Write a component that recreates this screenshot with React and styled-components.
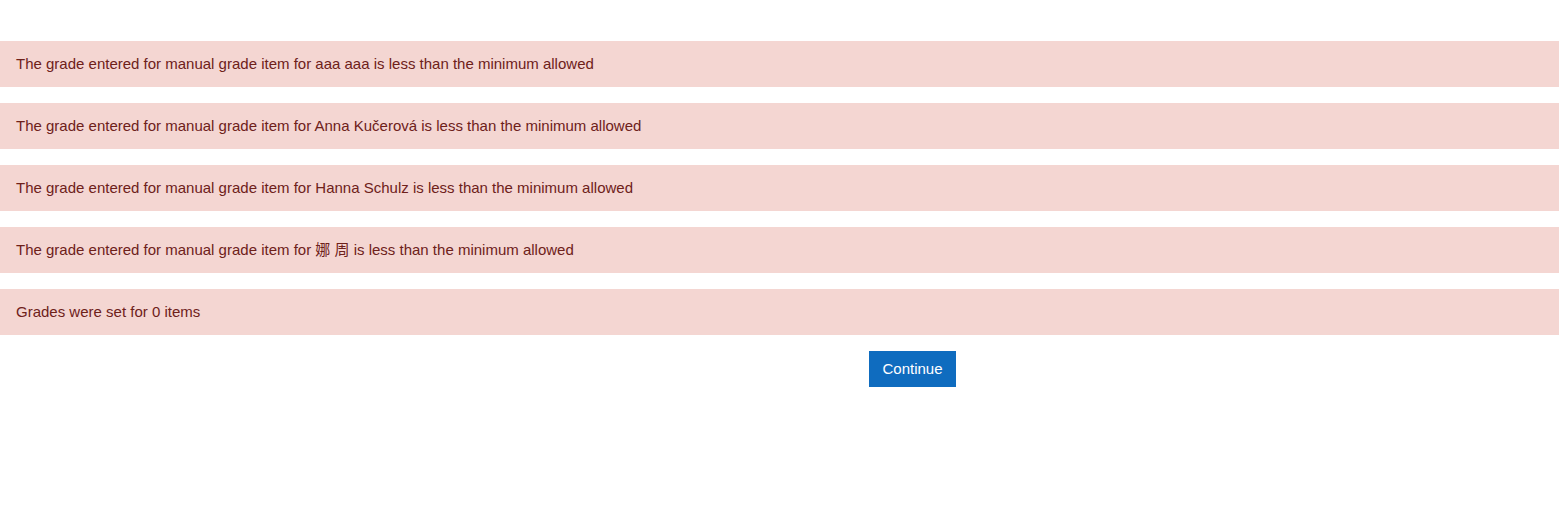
import React from "react";
import styled, { createGlobalStyle } from "styled-components";

const Global = createGlobalStyle`
  html, body { margin: 0; padding: 0; background: #fff; }
  body {
    font-family: "Liberation Sans", Arial, "Noto Sans CJK SC", sans-serif;
    font-size: 15px;
    line-height: 1.5;
    color: #1d2125;
  }
  * { box-sizing: border-box; }
`;

const Page = styled.div`
  padding-top: 41px;
`;

const Alert = styled.div`
  background: #f4d6d2;
  color: #6e211a;
  border: 1px solid transparent;
  padding: 11px 15px;
  margin-bottom: 16px;
  font-size: 15px;
  line-height: 22px;
  height: 46px;
`;

const ButtonRow = styled.div`
  display: flex;
  justify-content: center;
  padding-left: 266px;
`;

const Button = styled.button`
  font-family: "Liberation Sans", Arial, sans-serif;
  font-size: 15px;
  line-height: 22px;
  color: #fff;
  background: #0f6cbf;
  border: 1px solid #0f6cbf;
  border-radius: 0;
  padding: 6px 12px;
  height: 36px;
  cursor: pointer;
`;

const messages = [
  "The grade entered for manual grade item for aaa aaa is less than the minimum allowed",
  "The grade entered for manual grade item for Anna Kučerová is less than the minimum allowed",
  "The grade entered for manual grade item for Hanna Schulz is less than the minimum allowed",
  "The grade entered for manual grade item for 娜 周 is less than the minimum allowed",
  "Grades were set for 0 items",
];

export default function App() {
  return (
    <Page>
      <Global />
      {messages.map((m, i) => (
        <Alert key={i}>{m}</Alert>
      ))}
      <ButtonRow>
        <Button>Continue</Button>
      </ButtonRow>
    </Page>
  );
}
